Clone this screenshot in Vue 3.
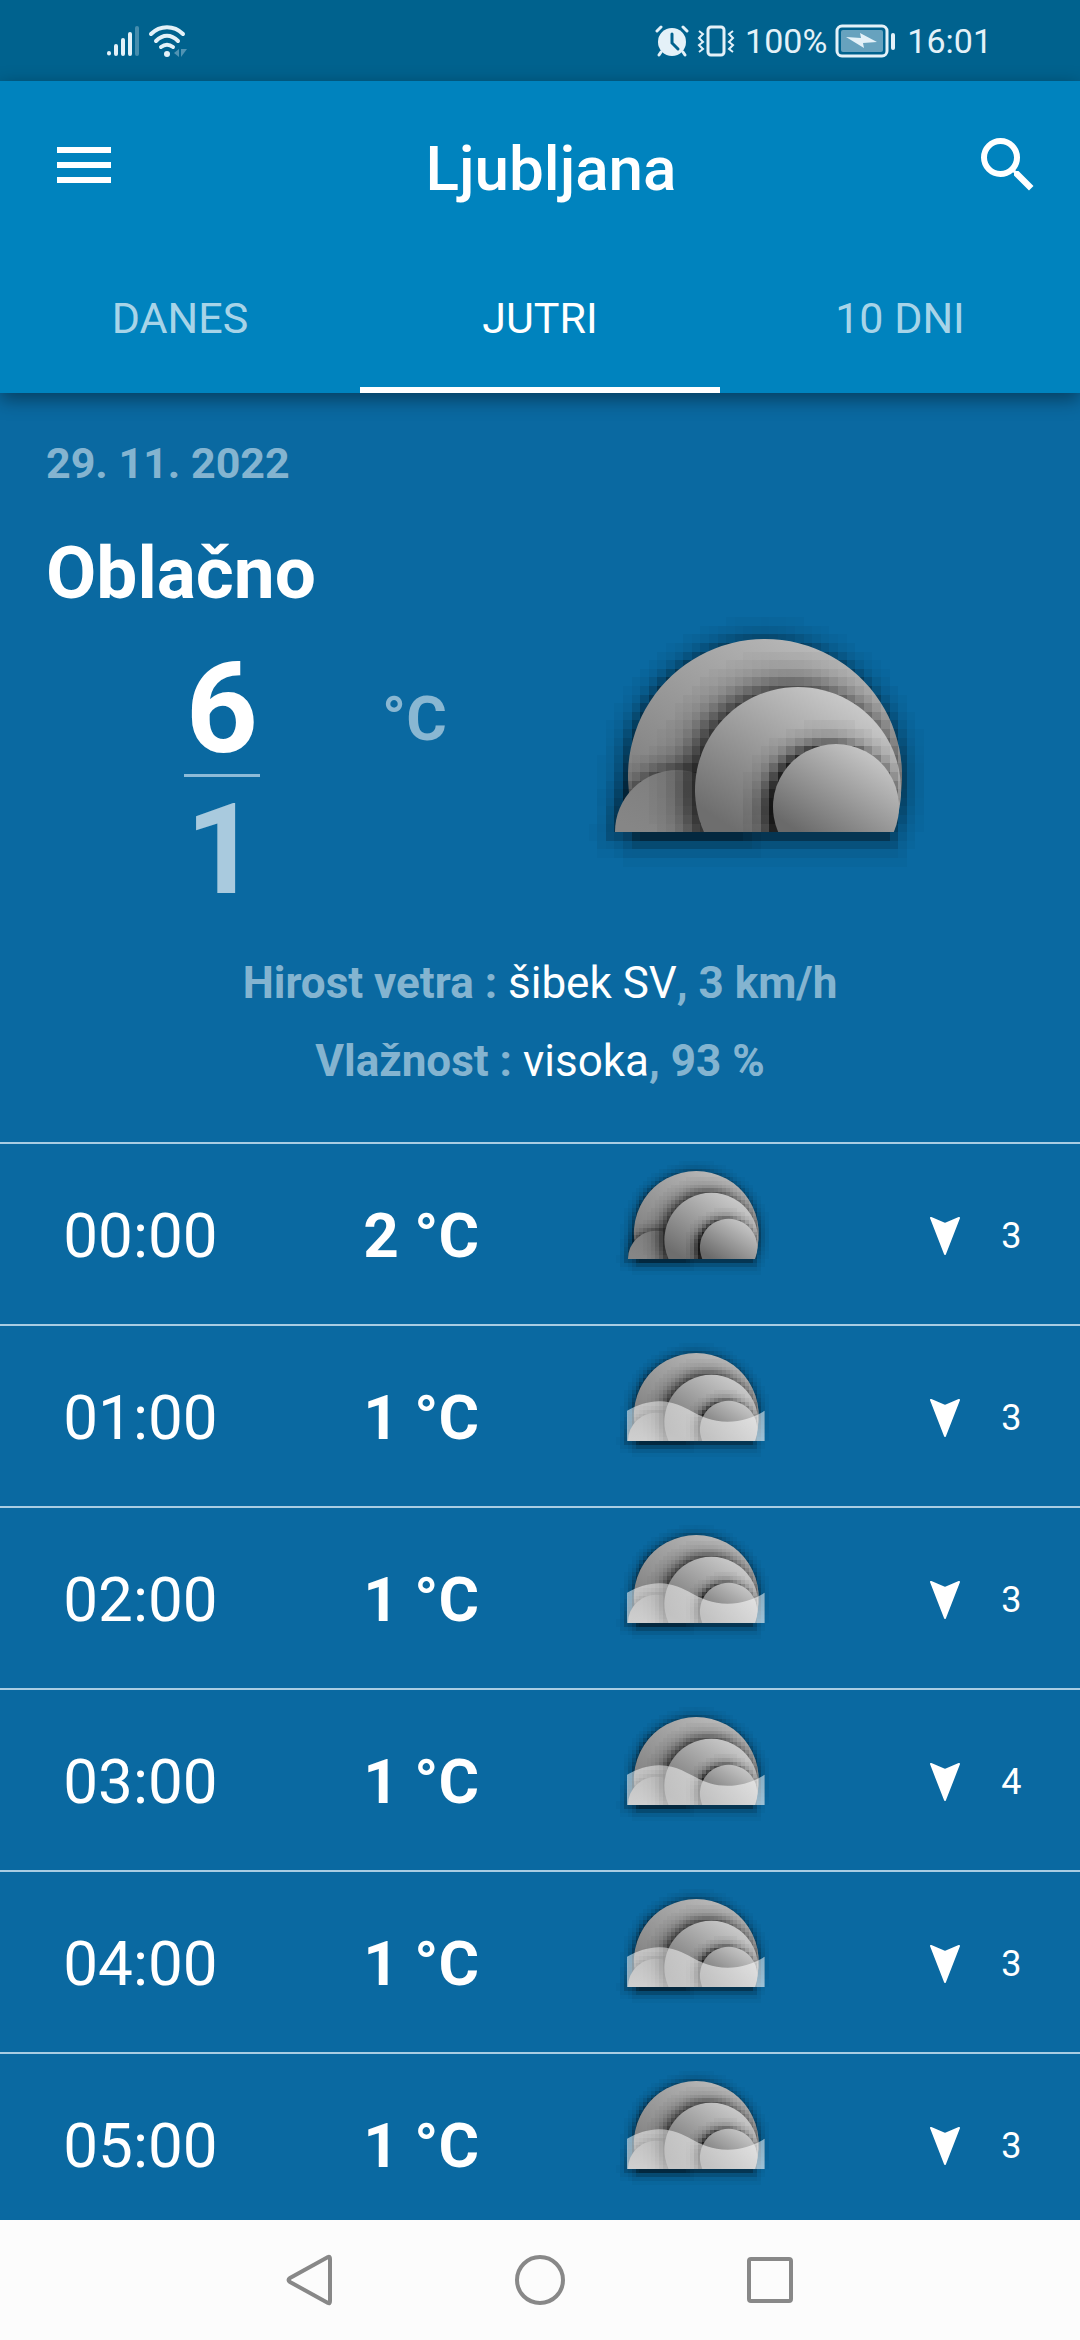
<script setup>
import { h } from 'vue'

const tabs = [
  { label: 'DANES', active: false },
  { label: 'JUTRI', active: true },
  { label: '10 DNI', active: false }
]

const hours = [
  { time: '00:00', temp: '2 °C', fog: false, wind: 3 },
  { time: '01:00', temp: '1 °C', fog: true, wind: 3 },
  { time: '02:00', temp: '1 °C', fog: true, wind: 3 },
  { time: '03:00', temp: '1 °C', fog: true, wind: 4 },
  { time: '04:00', temp: '1 °C', fog: true, wind: 3 },
  { time: '05:00', temp: '1 °C', fog: true, wind: 3 }
]

// Cloud: overlapping discs cut at a common base line, each with a blocky shadow.
const BASE = 232
const CELL = 8.6
const discs = [
  { cx: 185, cy: 176, r: 137, dx: -2, dy: 5, spread: 12, strength: 0.95, fill: 'back' },
  { cx: 97, cy: 231, r: 62, dx: 0, dy: 0, spread: 11, strength: 0.7, fill: 'left' },
  { cx: 218, cy: 190, r: 103, dx: -7, dy: 0, spread: 17, strength: 0.95, fill: 'mid' },
  { cx: 256, cy: 207, r: 63, dx: -7, dy: 2, spread: 11, strength: 1.1, fill: 'front' }
]

function shadowCells(disc) {
  const cells = []
  for (let row = 0; row < 32; row++) {
    for (let col = 0; col < 42; col++) {
      const x = (col + 0.5) * CELL
      const y = (row + 0.5) * CELL
      const radial = Math.hypot(x - disc.cx - disc.dx, y - disc.cy - disc.dy) - disc.r
      const below = y - BASE - disc.dy
      const d = Math.max(radial, below)
      const alpha = Math.min(1, disc.strength / (1 + Math.exp((1.7 * d) / disc.spread)))
      if (alpha > 0.02 && d > -30) cells.push({ x: col * CELL, y: row * CELL, alpha })
    }
  }
  return cells
}

function discPath({ cx, cy, r }) {
  const half = Math.sqrt(r * r - (BASE - cy) ** 2)
  return `M${cx - half} ${BASE}A${r} ${r} 0 1 1 ${cx + half} ${BASE}Z`
}

function smallDiscPath({ cx, r }) {
  return `M${cx - r} ${BASE}A${r} ${r} 0 0 1 ${cx + r} ${BASE}Z`
}

const backPath = discPath(discs[0])
const layers = discs.map((disc, i) => ({
  fill: disc.fill,
  path: i === 1 ? smallDiscPath(disc) : discPath(disc),
  cells: shadowCells(disc)
}))

const stops = {
  back: ['#7c7c7c', '#bcbcbc'],
  left: ['#868686', '#7c7c7c'],
  mid: ['#6e6e6e', '#cecece'],
  front: ['#6a6a6a', '#cacaca']
}

const CloudIcon = (props) => {
  const id = props.name
  const gradient = (key) =>
    h('linearGradient', { id: `${id}-${key}`, x1: 0.1, y1: 0.9, x2: 0.85, y2: 0.1 }, [
      h('stop', { offset: 0, 'stop-color': stops[key][0] }),
      h('stop', { offset: 1, 'stop-color': stops[key][1] })
    ])
  const children = [
    h('defs', [
      ...Object.keys(stops).map(gradient),
      h('linearGradient', { id: `${id}-fog`, x1: 0, y1: 0, x2: 0, y2: 1 }, [
        h('stop', { offset: 0, 'stop-color': '#fff', 'stop-opacity': 0.5 }),
        h('stop', { offset: 1, 'stop-color': '#fff', 'stop-opacity': 0.6 })
      ]),
      h('clipPath', { id: `${id}-clip` }, [
        h('path', { d: backPath }),
        h('path', { d: layers[1].path })
      ])
    ])
  ]
  layers.forEach((layer, i) => {
    children.push(
      h(
        'g',
        { 'shape-rendering': 'crispEdges', 'clip-path': i > 1 ? `url(#${id}-clip)` : null },
        layer.cells.map((c) =>
          h('rect', { x: c.x, y: c.y, width: CELL, height: CELL, 'fill-opacity': c.alpha })
        )
      ),
      h('path', { d: layer.path, fill: `url(#${id}-${layer.fill})` })
    )
  })
  if (props.fog) {
    children.push(
      h('path', {
        d: 'M33 166C55 153 80 145 104 145C165 145 185 190 254 190C285 190 312 180 335 166V232H33Z',
        fill: `url(#${id}-fog)`
      })
    )
  }
  return h('svg', { viewBox: '0 0 360 280', 'aria-hidden': 'true' }, children)
}
CloudIcon.props = ['name', 'fog']
</script>

<template>
  <div class="screen">
    <div class="status">
      <div class="status-side">
        <svg width="34" height="32" viewBox="0 0 34 32" stroke="#e4f1f8" stroke-width="4" stroke-linecap="round">
          <path d="M3 28v0.5M10 21v8M17 15v14M24 9v20" />
          <path d="M31 3v26" opacity=".3" />
        </svg>
        <svg width="40" height="34" viewBox="0 0 40 34" fill="none" stroke="#e4f1f8" stroke-width="4" stroke-linecap="round">
          <path d="M3 10C12 1 26 1 35 10M8 17C15 10 23 10 30 17M13 23C17 20 21 20 25 23" />
          <circle cx="19" cy="30" r="3" fill="#e4f1f8" stroke="none" />
          <path d="M31 25v8l-5-4zM33 25h6l-6 8z" fill="#e4f1f8" stroke="none" opacity=".35" />
        </svg>
      </div>
      <div class="status-side">
        <svg width="34" height="32" viewBox="0 0 34 32" fill="none" stroke="#e4f1f8" stroke-width="3" stroke-linecap="round">
          <circle cx="17" cy="17" r="14" fill="#e4f1f8" stroke="none" />
          <path d="M2 6l4-4M28 2l4 4M6 27l-2 3M28 27l2 3" />
          <path d="M17 9v9l6 6" stroke="#00628e" />
        </svg>
        <svg class="vibrate" width="38" height="32" viewBox="0 0 38 32" fill="none" stroke="#e4f1f8" stroke-width="3">
          <rect x="11" y="2" width="16" height="28" rx="3" />
          <path d="M2 6l4 3-4 4 4 4-4 3 4 4-4 3M36 6l-4 3 4 4-4 4 4 3-4 4 4 3" stroke-width="2" />
        </svg>
        <span>100%</span>
        <svg width="60" height="34" viewBox="0 0 60 34" fill="none">
          <rect x="2" y="2" width="50" height="30" rx="5" stroke="#e4f1f8" stroke-width="3" />
          <rect x="6" y="6" width="42" height="22" rx="2" fill="#e4f1f8" fill-opacity=".45" />
          <path d="M11 13l15 1-1-5 17 9-14 1 1 5z" fill="#e4f1f8" />
          <path d="M58 11v13" stroke="#e4f1f8" stroke-width="4" stroke-linecap="round" />
        </svg>
        <span class="clock">16:01</span>
      </div>
    </div>

    <header class="header">
      <div class="bar">
        <button class="icon-button" type="button" aria-label="Meni">
          <svg width="72" height="72" viewBox="0 0 24 24" fill="#fff"><path d="M3 6h18v2H3zM3 11h18v2H3zM3 16h18v2H3z" /></svg>
        </button>
        <h1>Ljubljana</h1>
        <button class="icon-button" type="button" aria-label="Iskanje">
          <svg width="72" height="72" viewBox="0 0 24 24" fill="#fff">
            <path d="M15.500 14h-.79l-.28-.27A6.470 6.470 0 0 0 16 9.500 6.500 6.500 0 1 0 9.500 16c1.610 0 3.090-.59 4.230-1.570l.27.280v.79l5 4.990L20.490 19l-4.990-5zm-6 0C7.010 14 5 11.990 5 9.500S7.010 5 9.500 5 14 7.010 14 9.500 11.990 14 9.500 14z" />
          </svg>
        </button>
      </div>
      <nav class="tabs">
        <button v-for="tab in tabs" :key="tab.label" type="button" class="tab" :class="{ active: tab.active }">
          {{ tab.label }}
        </button>
      </nav>
    </header>

    <main class="content">
      <section class="hero">
        <div>
          <p class="date">29. 11. 2022</p>
          <h2>Oblačno</h2>
          <div class="temps">
            <div class="range">
              <span class="high">6</span>
              <span class="low">1</span>
            </div>
            <span class="unit">°C</span>
          </div>
        </div>
        <CloudIcon class="cloud-large" name="now" />
      </section>

      <section class="details">
        <p>Hirost vetra : <span>šibek SV</span>, 3 km/h</p>
        <p>Vlažnost : <span>visoka</span>, 93 %</p>
      </section>

      <table class="hours">
        <colgroup>
          <col class="col-time" />
          <col class="col-temp" />
          <col class="col-sky" />
          <col class="col-wind" />
        </colgroup>
        <tbody>
          <tr v-for="hour in hours" :key="hour.time">
            <th scope="row">{{ hour.time }}</th>
            <td class="temp">{{ hour.temp }}</td>
            <td class="sky"><CloudIcon class="cloud-small" :name="'h' + hour.time.slice(0, 2)" :fog="hour.fog" /></td>
            <td>
              <div class="wind">
                <svg width="32" height="38" viewBox="0 0 32 38" fill="#fff" stroke="#fff" stroke-width="2" stroke-linejoin="round">
                  <path d="M2 1l14 6 14-6-14 36z" />
                </svg>
                <span>{{ hour.wind }}</span>
              </div>
            </td>
          </tr>
        </tbody>
      </table>
    </main>

    <nav class="system-nav">
      <button type="button" aria-label="Nazaj">
        <svg width="52" height="52" viewBox="0 0 52 52"><path d="M44 3Q46 2 46 5V47Q46 50 44 49L6 28Q3 26 6 24Z" /></svg>
      </button>
      <button type="button" aria-label="Domov">
        <svg width="52" height="52" viewBox="0 0 52 52"><circle cx="26" cy="26" r="23" /></svg>
      </button>
      <button type="button" aria-label="Nedavno">
        <svg width="52" height="52" viewBox="0 0 52 52"><rect x="5" y="5" width="42" height="42" rx="2" /></svg>
      </button>
    </nav>
  </div>
</template>

<style>
body {
  margin: 0;
  background: #0a69a1;
}
</style>

<style scoped>
.screen {
  display: flex;
  flex-direction: column;
  height: 100vh;
  background: #0a69a1;
  color: #fff;
  font-family: Roboto, "Noto Sans", sans-serif;
}

button {
  padding: 0;
  border: 0;
  background: none;
  color: inherit;
  font: inherit;
}

svg {
  display: block;
}

h1,
h2,
p {
  margin: 0;
}

.status {
  display: flex;
  flex: none;
  align-items: center;
  justify-content: space-between;
  height: 81px;
  padding: 0 88px 0 106px;
  background: #00628e;
  color: #e4f1f8;
  font-size: 34px;
}

.status-side {
  display: flex;
  align-items: center;
  gap: 8px;
}

.vibrate {
  margin-right: 2px;
}

.clock {
  margin-left: 4px;
}

.header {
  position: relative;
  z-index: 1;
  flex: none;
  background: #0083be;
  box-shadow: 0 6px 18px rgba(0, 0, 0, 0.42);
}

.bar {
  display: flex;
  align-items: center;
  height: 168px;
  padding: 0 36px 0 48px;
}

.bar h1 {
  flex: 1;
  padding: 8px 0 0 10px;
  font-size: 62px;
  font-weight: 500;
  line-height: 72px;
  text-align: center;
}

.tabs {
  display: grid;
  grid-template-columns: repeat(3, 1fr);
  height: 144px;
}

.tab {
  box-sizing: border-box;
  border-bottom: 6px solid transparent;
  color: rgba(255, 255, 255, 0.68);
  font-size: 43px;
}

.tab.active {
  border-color: #fff;
  color: #fff;
}

.content {
  flex: 1;
  min-height: 0;
  overflow-y: auto;
  scrollbar-width: none;
}

.hero {
  display: grid;
  grid-template-columns: 1fr 500px;
  align-items: end;
  padding: 45px 0 0 46px;
}

.date {
  color: rgba(255, 255, 255, 0.52);
  font-size: 43px;
  font-weight: 700;
  line-height: 50px;
}

.hero h2 {
  margin: 43px 0 38px;
  font-size: 73px;
  font-weight: 700;
  line-height: 84px;
}

.temps {
  display: flex;
  align-items: flex-start;
  gap: 122px;
  padding-left: 138px;
}

.range {
  display: flex;
  flex-direction: column;
  width: 76px;
  font-size: 126px;
  font-weight: 700;
  line-height: 110px;
  text-align: center;
}

.high {
  padding: 1px 0 10px;
  border-bottom: 3px solid #8dbbd8;
}

.low {
  padding-top: 18px;
  color: rgba(255, 255, 255, 0.65);
}

.unit {
  margin-top: 34px;
  color: rgba(255, 255, 255, 0.52);
  font-size: 62px;
  font-weight: 700;
  line-height: 64px;
}

.cloud-large {
  width: 360px;
  height: 280px;
  margin-bottom: 25px;
}

.details {
  padding: 39px 0 42px;
  color: rgba(255, 255, 255, 0.52);
  font-size: 44px;
  font-weight: 700;
  line-height: 78px;
  text-align: center;
}

.details span {
  color: #fff;
  font-weight: 400;
}

.hours {
  width: 100%;
  border-spacing: 0;
  table-layout: fixed;
}

.col-time,
.col-temp {
  width: 26%;
}

.col-sky {
  width: 24%;
}

.hours th,
.hours td {
  box-sizing: border-box;
  height: 182px;
  padding: 3px 0 0;
  border-top: 2px solid #a9cde3;
  font-size: 62px;
  font-weight: 400;
  text-align: center;
}

.hours .temp {
  font-weight: 700;
}

.hours .sky {
  padding: 9px 0 0 6px;
  vertical-align: top;
}

.cloud-small {
  width: 164px;
  height: 128px;
  margin: 0 auto;
}

.wind {
  display: flex;
  align-items: center;
  justify-content: center;
  gap: 40px;
  padding-left: 50px;
  font-size: 36px;
}

.system-nav {
  display: flex;
  flex: none;
  align-items: center;
  justify-content: center;
  gap: 178px;
  height: 120px;
  background: #fcfcfc;
}

.system-nav svg {
  fill: none;
  stroke: #888;
  stroke-width: 4px;
}
</style>
